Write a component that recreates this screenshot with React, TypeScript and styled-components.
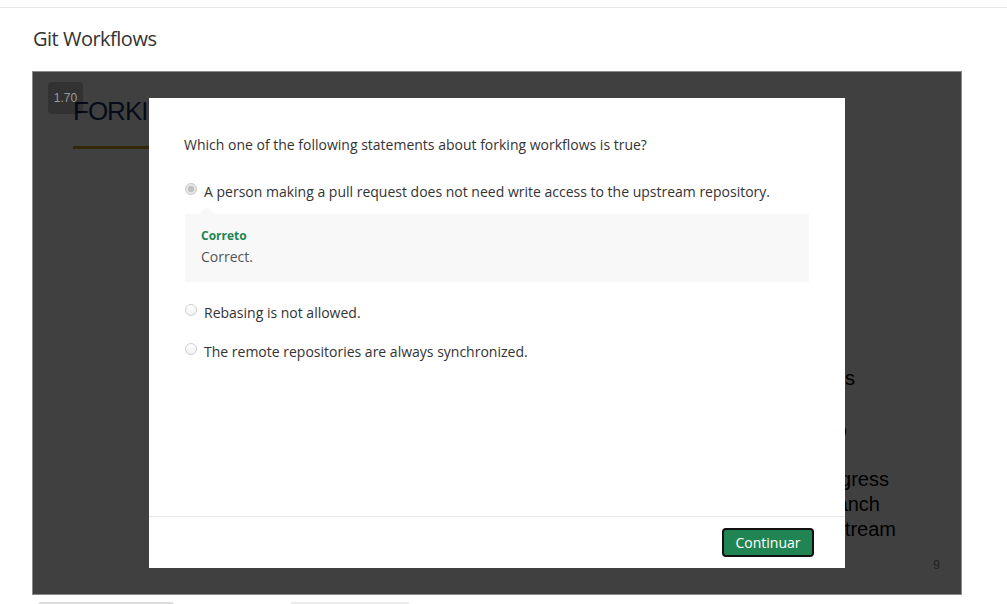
import React from "react";
import styled, { createGlobalStyle } from "styled-components";

const GlobalStyle = createGlobalStyle`
  body {
    margin: 0;
    background: #fff;
    font-family: "Open Sans", "Noto Sans", sans-serif;
    color: #333;
    overflow: hidden;
  }
`;

const TopBar = styled.div`
  height: 7px;
  border-bottom: 1px solid #e6e6e6;
`;

const Content = styled.main`
  padding: 0 45px 0 32px;
`;

const Title = styled.h1`
  margin: 19px 0 0 1px;
  font-size: 20px;
  line-height: 24px;
  font-weight: 400;
  color: #333;
  letter-spacing: -0.5px;
`;

const Player = styled.div`
  position: relative;
  margin-top: 20px;
  width: 928px;
  height: 522px;
  border: 1px solid #8a8a8a;
  background: #fff;
  overflow: hidden;
`;

const Slide = styled.div`
  position: absolute;
  inset: 0;
  font-family: "Liberation Sans", Arial, sans-serif;
`;

const SlideHeading = styled.div`
  position: absolute;
  left: 40px;
  top: 24px;
  font-size: 26px;
  color: #1c2f66;
  letter-spacing: -1px;
`;

const SlideRule = styled.div`
  position: absolute;
  left: 40px;
  top: 74px;
  width: 400px;
  height: 3px;
  background: #c89b1e;
`;

const SlideLine = styled.div<{ $right: number; $top: number }>`
  position: absolute;
  right: ${(p) => p.$right}px;
  top: ${(p) => p.$top}px;
  font-size: 20px;
  line-height: 24px;
  color: #000;
  white-space: nowrap;
`;

const SlideNumber = styled.div`
  position: absolute;
  right: 21px;
  bottom: 22px;
  font-size: 12px;
  color: #8a8a8a;
`;

const Dim = styled.div`
  position: absolute;
  inset: 0;
  background: rgba(0, 0, 0, 0.75);
`;

const SpeedBadge = styled.div`
  position: absolute;
  left: 15px;
  top: 10px;
  width: 35px;
  height: 32px;
  border-radius: 4px;
  background: rgba(0, 0, 0, 0.22);
  color: #9a9a9a;
  font-family: "Liberation Sans", Arial, sans-serif;
  font-size: 12px;
  display: flex;
  align-items: center;
  justify-content: center;
`;

const Modal = styled.div`
  position: absolute;
  left: 116px;
  top: 26px;
  width: 696px;
  height: 470px;
  background: #fff;
  display: flex;
  flex-direction: column;
`;

const ModalBody = styled.div`
  flex: 1;
  display: flex;
  flex-direction: column;
  align-items: stretch;
  padding: 37px 36px 0 35px;
  font-size: 14px;
  line-height: 20px;
  color: #333;
`;

const Question = styled.p`
  margin: 0 0 27px;
`;

const Option = styled.label<{ $gap: number }>`
  display: flex;
  align-items: flex-start;
  gap: 7px;
  margin-top: ${(p) => p.$gap}px;
  color: #333;
`;

const Radio = styled.span<{ $checked?: boolean }>`
  flex: none;
  width: 12px;
  height: 12px;
  margin: 1px 0 0 1px;
  border-radius: 50%;
  box-sizing: border-box;
  border: 1px solid ${(p) => (p.$checked ? "#c9c9c9" : "#cfcfcf")};
  background: ${(p) =>
    p.$checked
      ? "radial-gradient(circle, #c2c2c2 0 3px, #e6e6e6 3.5px)"
      : "linear-gradient(#fff, #f1f1f1)"};
`;

const Feedback = styled.div`
  position: relative;
  margin: 12px 0 0 1px;
  padding: 14px 16px 15px;
  background: #f8f8f8;

  &::before {
    content: "";
    position: absolute;
    left: 14px;
    top: -7px;
    border-left: 8px solid transparent;
    border-right: 8px solid transparent;
    border-bottom: 7px solid #f8f8f8;
  }
`;

const FeedbackLabel = styled.div`
  font-size: 12px;
  line-height: 16px;
  font-weight: 700;
  color: #218553;
`;

const FeedbackText = styled.div`
  margin-top: 3px;
  color: #555;
`;

const ModalFooter = styled.div`
  height: 51px;
  border-top: 1px solid #e8e8e8;
  display: flex;
  align-items: center;
  justify-content: flex-end;
  padding: 0 31px;
`;

const PrimaryButton = styled.button`
  width: 92px;
  height: 29px;
  border: 2px solid #111;
  border-radius: 4px;
  background: #218553;
  color: #fff;
  font-family: "Open Sans", sans-serif;
  font-size: 14px;
  padding: 0;
  cursor: pointer;
`;

const TabRow = styled.div`
  display: flex;
  gap: 116px;
  margin: 7px 0 0 6px;
`;

const Tab = styled.div<{ $width: number; $tone: string }>`
  width: ${(p) => p.$width}px;
  height: 20px;
  border-radius: 3px 3px 0 0;
  background: ${(p) => p.$tone};
`;

const options = [
  "A person making a pull request does not need write access to the upstream repository.",
  "Rebasing is not allowed.",
  "The remote repositories are always synchronized.",
];

const slideLines = [
  { text: "Remote repositories", right: 106, top: 294 },
  { text: "Push to your fork repo", right: 114, top: 346 },
  { text: "Work in progress", right: 72, top: 395 },
  { text: "Feature branch", right: 81, top: 420 },
  { text: "Merge upstream", right: 65, top: 445 },
];

export default function App() {
  return (
    <>
      <GlobalStyle />
      <TopBar />
      <Content>
        <Title>Git Workflows</Title>
        <Player>
          <Slide>
            <SlideHeading>FORKING WORKFLOW</SlideHeading>
            <SlideRule />
            {slideLines.map((line) => (
              <SlideLine key={line.text} $right={line.right} $top={line.top}>
                {line.text}
              </SlideLine>
            ))}
            <SlideNumber>9</SlideNumber>
          </Slide>
          <Dim />
          <SpeedBadge>1.70</SpeedBadge>
          <Modal>
            <ModalBody>
              <Question>
                Which one of the following statements about forking workflows is true?
              </Question>
              <Option $gap={0}>
                <Radio $checked />
                {options[0]}
              </Option>
              <Feedback>
                <FeedbackLabel>Correto</FeedbackLabel>
                <FeedbackText>Correct.</FeedbackText>
              </Feedback>
              <Option $gap={21}>
                <Radio />
                {options[1]}
              </Option>
              <Option $gap={19}>
                <Radio />
                {options[2]}
              </Option>
            </ModalBody>
            <ModalFooter>
              <PrimaryButton>Continuar</PrimaryButton>
            </ModalFooter>
          </Modal>
        </Player>
        <TabRow>
          <Tab $width={136} $tone="#dcdcdc" />
          <Tab $width={120} $tone="#ececec" />
        </TabRow>
      </Content>
    </>
  );
}
